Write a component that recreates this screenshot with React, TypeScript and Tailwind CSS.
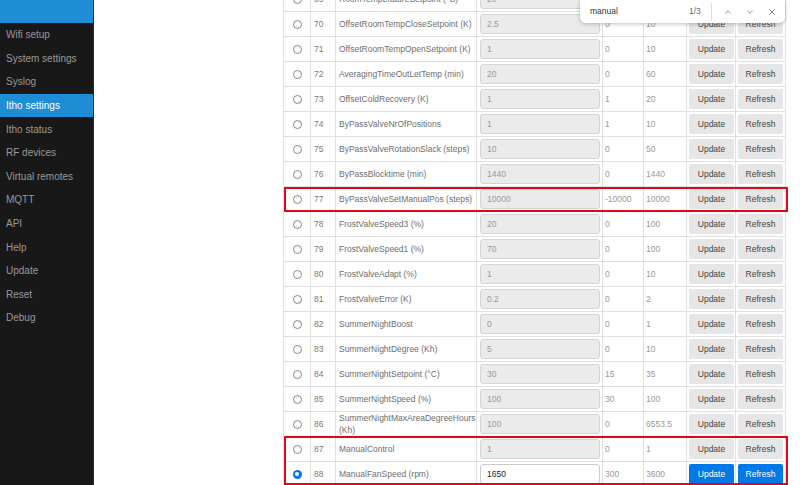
import { ChevronUp, ChevronDown, X } from 'lucide-react';

interface SettingRow {
   id: number;
   name: string;
   value: string;
   min: string;
   max: string;
}

const menuItems = [
   'Wifi setup',
   'System settings',
   'Syslog',
   'Itho settings',
   'Itho status',
   'RF devices',
   'Virtual remotes',
   'MQTT',
   'API',
   'Help',
   'Update',
   'Reset',
   'Debug',
];

const rows: SettingRow[] = [
   { id: 69, name: 'RoomTemperatureSetpoint (°C)', value: '20', min: '15', max: '25' },
   { id: 70, name: 'OffsetRoomTempCloseSetpoint (K)', value: '2.5', min: '0', max: '10' },
   { id: 71, name: 'OffsetRoomTempOpenSetpoint (K)', value: '1', min: '0', max: '10' },
   { id: 72, name: 'AveragingTimeOutLetTemp (min)', value: '20', min: '0', max: '60' },
   { id: 73, name: 'OffsetColdRecovery (K)', value: '1', min: '1', max: '20' },
   { id: 74, name: 'ByPassValveNrOfPositions', value: '1', min: '1', max: '10' },
   { id: 75, name: 'ByPassValveRotationSlack (steps)', value: '10', min: '0', max: '50' },
   { id: 76, name: 'ByPassBlocktime (min)', value: '1440', min: '0', max: '1440' },
   { id: 77, name: 'ByPassValveSetManualPos (steps)', value: '10000', min: '-10000', max: '10000' },
   { id: 78, name: 'FrostValveSpeed3 (%)', value: '20', min: '0', max: '100' },
   { id: 79, name: 'FrostValveSpeed1 (%)', value: '70', min: '0', max: '100' },
   { id: 80, name: 'FrostValveAdapt (%)', value: '1', min: '0', max: '10' },
   { id: 81, name: 'FrostValveError (K)', value: '0.2', min: '0', max: '2' },
   { id: 82, name: 'SummerNightBoost', value: '0', min: '0', max: '1' },
   { id: 83, name: 'SummerNightDegree (Kh)', value: '5', min: '0', max: '10' },
   { id: 84, name: 'SummerNightSetpoint (°C)', value: '30', min: '15', max: '35' },
   { id: 85, name: 'SummerNightSpeed (%)', value: '100', min: '30', max: '100' },
   { id: 86, name: 'SummerNightMaxAreaDegreeHours (Kh)', value: '100', min: '0', max: '6553.5' },
   { id: 87, name: 'ManualControl', value: '1', min: '0', max: '1' },
   { id: 88, name: 'ManualFanSpeed (rpm)', value: '1650', min: '300', max: '3600' },
];

const selectedId = 88;

const Sidebar = () => (
   <aside className="w-[94px] shrink-0 bg-[#191818] border-r border-[#2a2a2a]">
      <div className="h-[23px] bg-[#1f8dd6]" />
      <ul>
         {menuItems.map((item) => (
            <li
               key={item}
               className={
                  item === 'Itho settings'
                     ? 'h-[23.6px] flex items-center pl-[6px] text-[10px] text-white bg-[#1f8dd6]'
                     : 'h-[23.6px] flex items-center pl-[6px] text-[10px] text-[#999]'
               }
            >
               {item}
            </li>
         ))}
      </ul>
   </aside>
);

const Radio = ({ checked }: { checked: boolean }) =>
   checked ? (
      <span className="w-[9px] h-[9px] rounded-full bg-[#0075ff] flex items-center justify-center">
         <span className="w-[4px] h-[4px] rounded-full bg-white" />
      </span>
   ) : (
      <span className="w-[9px] h-[9px] rounded-full border border-[#858585] bg-white" />
   );

const Row = ({ row }: { row: SettingRow }) => {
   const active = row.id === selectedId;
   const cell = 'border-r border-[#e0e0e0] h-full flex items-center';
   const btn = active
      ? 'w-[45px] h-[20px] rounded-[2px] bg-[#0078e7] text-white text-[8.5px]'
      : 'w-[45px] h-[20px] rounded-[2px] bg-[#e6e6e6] text-[#444] text-[8.5px]';

   return (
      <div className="grid grid-cols-[27px_25px_141px_126px_41px_43px_49px_50px] h-[25px] border-l border-b border-[#e0e0e0]">
         <div className={`${cell} justify-center`}>
            <Radio checked={active} />
         </div>
         <div className={`${cell} pl-[3px] text-[#85786a]`}>{row.id}</div>
         <div className={`${cell} pl-[3px] pr-[2px] leading-[12px] text-[#6e6e6e]`}>{row.name}</div>
         <div className={`${cell} pl-[3px] pr-[2px]`}>
            <div
               className={
                  active
                     ? 'w-full h-[20px] flex items-center pl-[6px] rounded-[3px] border border-[#ccc] bg-white text-[#222]'
                     : 'w-full h-[20px] flex items-center pl-[6px] rounded-[3px] border border-[#d4d4d4] bg-[#ebebeb] text-[#9a9a9a]'
               }
            >
               {row.value}
            </div>
         </div>
         <div className={`${cell} pl-[2px] text-[#999]`}>{row.min}</div>
         <div className={`${cell} pl-[2px] text-[#999]`}>{row.max}</div>
         <div className={`${cell} justify-center pl-[1px]`}>
            <button className={btn}>Update</button>
         </div>
         <div className={`${cell} justify-center`}>
            <button className={btn}>Refresh</button>
         </div>
      </div>
   );
};

const FindBar = () => (
   <div className="absolute top-0 left-[486px] w-[205px] h-[23px] bg-white rounded-b-[6px] shadow-[0_1px_4px_rgba(0,0,0,0.25)] flex items-center text-[8.5px]">
      <span className="pl-[10px] text-[#333] w-[109px]">manual</span>
      <span className="text-[#666] w-[22px]">1/3</span>
      <span className="w-px h-[18px] bg-[#ddd]" />
      <span className="flex items-center gap-[12px] pl-[11px] text-[#555]">
         <ChevronUp size={10} strokeWidth={1.6} />
         <ChevronDown size={10} strokeWidth={1.6} />
         <X size={10} strokeWidth={1.8} />
      </span>
   </div>
);

export default function App() {
   return (
      <div className="flex w-[800px] h-[485px] overflow-hidden bg-white font-['Liberation_Sans',Arial,sans-serif]">
         <Sidebar />
         <main className="relative flex-1 overflow-hidden">
            <div className="ml-[189px] mt-[-13px] w-[503px] text-[8.5px]">
               {rows.map((row) => (
                  <Row key={row.id} row={row} />
               ))}
            </div>
            <FindBar />
            {/* highlight boxes */}
            <div className="absolute left-[190px] top-[187px] w-[504px] h-[25px] border-2 border-[#e30613]" />
            <div className="absolute left-[190px] top-[436px] w-[504px] h-[49px] border-2 border-[#e30613]" />
         </main>
      </div>
   );
}
